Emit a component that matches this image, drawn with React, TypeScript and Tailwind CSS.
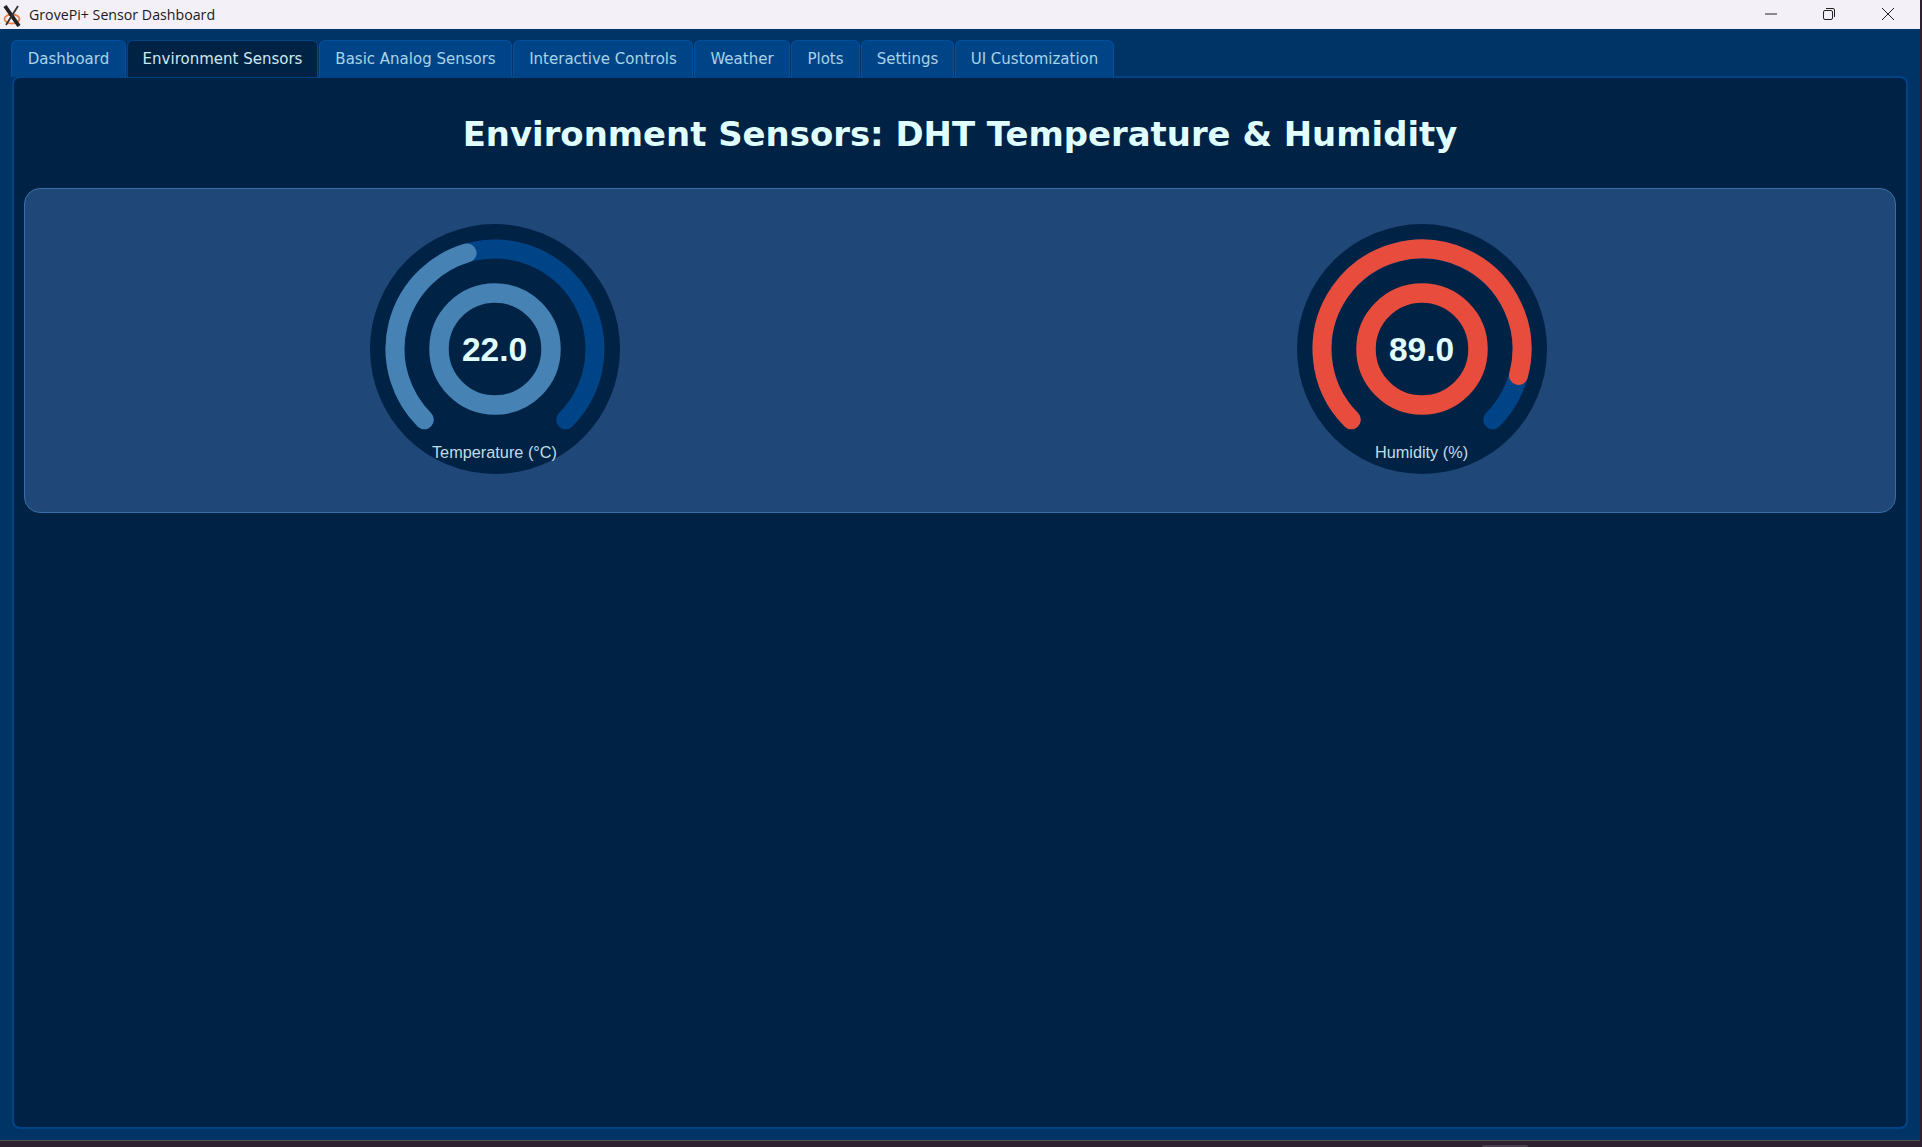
const tabs = [
  { name: 'Dashboard', w: 'w-[115px]' },
  { name: 'Environment Sensors', w: 'w-[191px]', active: true },
  { name: 'Basic Analog Sensors', w: 'w-[193px]' },
  { name: 'Interactive Controls', w: 'w-[180px]' },
  { name: 'Weather', w: 'w-[96px]' },
  { name: 'Plots', w: 'w-[69px]' },
  { name: 'Settings', w: 'w-[93px]' },
  { name: 'UI Customization', w: 'w-[159px]' },
]

const gauges = [
  { label: 'Temperature (°C)', value: 22, max: 50, color: '#4682b4' },
  { label: 'Humidity (%)', value: 89, max: 100, color: '#e74c3c' },
]

const R = 100
const ARC = 270

function polar(deg: number, r: number) {
  const a = (deg * Math.PI) / 180
  return { x: 125 + r * Math.sin(a), y: 125 - r * Math.cos(a) }
}

function arcPath(from: number, to: number) {
  const a = polar(from, R)
  const b = polar(to, R)
  const large = to - from > 180 ? 1 : 0
  return `M ${a.x} ${a.y} A ${R} ${R} 0 ${large} 1 ${b.x} ${b.y}`
}

function Gauge({ label, value, max, color }: (typeof gauges)[number]) {
  const end = -135 + (value / max) * ARC
  return (
    <div className="relative w-[250px] h-[250px]">
      <svg width="250" height="250" viewBox="0 0 250 250" className="block">
        <circle cx="125" cy="125" r="125" fill="#002244" />
        <path d={arcPath(-135, 135)} fill="none" stroke="#004488" strokeWidth="19" strokeLinecap="round" />
        <path d={arcPath(-135, end)} fill="none" stroke={color} strokeWidth="19" strokeLinecap="round" />
        <circle cx="125" cy="125" r="56" fill="none" stroke={color} strokeWidth="19.5" />
      </svg>
      <div className="absolute inset-0 flex items-center justify-center pt-[3px] text-[#e0ffff] text-[33.5px] font-bold font-['Liberation_Sans',sans-serif]">
        {value.toFixed(1)}
      </div>
      <div className="absolute left-0 right-0 top-[219px] text-center text-[16.3px] leading-[18px] text-[#c0dce6] font-['Liberation_Sans',sans-serif]">
        {label}
      </div>
    </div>
  )
}

function TitleBar() {
  return (
    <div className="h-[29px] shrink-0 bg-[#f3f0f7] flex items-center text-[#1a1a1a]">
      <svg width="22" height="24" viewBox="0 0 22 24" className="ml-[1px] mr-[6px]">
        <ellipse cx="11" cy="16" rx="7.5" ry="4.5" fill="none" stroke="#e8814a" strokeWidth="1.8" />
        <path d="M4 3 L18 23" stroke="#222" strokeWidth="3.8" />
        <path d="M17 3 L5 22" stroke="#333" strokeWidth="1.8" />
      </svg>
      <span className="text-[14.2px] font-['Open_Sans',sans-serif]">GrovePi+ Sensor Dashboard</span>
      <div className="ml-auto flex items-center -mt-[2px]">
        <svg width="14" height="14" viewBox="0 0 14 14" className="mr-[44px]">
          <path d="M1 7 H13" stroke="#222" strokeWidth="1" />
        </svg>
        <svg width="14" height="14" viewBox="0 0 14 14" className="mr-[45px]">
          <rect x="1.5" y="3.5" width="9" height="9" rx="1.5" fill="none" stroke="#222" strokeWidth="1" />
          <path d="M4 1.5 H11 Q12.5 1.5 12.5 3 V10" fill="none" stroke="#222" strokeWidth="1" />
        </svg>
        <svg width="14" height="14" viewBox="0 0 14 14" className="mr-[25px]">
          <path d="M1 1 L13 13 M13 1 L1 13" stroke="#222" strokeWidth="1" />
        </svg>
      </div>
    </div>
  )
}

export default function App() {
  return (
    <div className="w-[1922px] h-[1147px] overflow-hidden bg-[#2f2030] flex flex-col items-start font-['DejaVu_Sans',sans-serif]">
      <div className="w-[1920px] h-[1141px] shrink-0 flex flex-col bg-[#003366] border-b border-[#555]">
        <TitleBar />
        <div className="flex flex-col flex-1 min-h-0 pl-[12px] pr-[12px] pb-[11px]">
          <div className="flex h-[37px] mt-[11px] -ml-[1px] gap-[1px] shrink-0 relative z-10">
            {tabs.map((t) => (
              <div
                key={t.name}
                className={`${t.w} flex items-center justify-center rounded-t-[6px] text-[15px] border border-b-0 ${
                  t.active
                    ? 'bg-[#002244] text-[#cfe8ef] border-[#004488]'
                    : 'bg-[#004488] text-[#a9d3e6] border-[#00509e]'
                }`}
              >
                {t.name}
              </div>
            ))}
          </div>
          <div className="flex-1 min-h-0 bg-[#002244] border-2 border-[#004488] rounded-[8px] -mt-[1px] px-[10px]">
            <h1 className="h-[110px] flex items-center justify-center pt-[4px] text-[33.9px] font-bold text-[#e0ffff]">
              Environment Sensors: DHT Temperature &amp; Humidity
            </h1>
            <div className="h-[325px] bg-[#1f4778] border border-[#3a6ea8] rounded-[16px] pt-[35px] pl-[6px] pr-[10px] grid grid-cols-2">
              {gauges.map((g) => (
                <div key={g.label} className="flex justify-center">
                  <Gauge {...g} />
                </div>
              ))}
            </div>
          </div>
        </div>
      </div>
      <div className="ml-[1482px] mt-[4px] w-[46px] h-[2px] rounded-t-[2px] bg-[#4a3d4e]" />
    </div>
  )
}
